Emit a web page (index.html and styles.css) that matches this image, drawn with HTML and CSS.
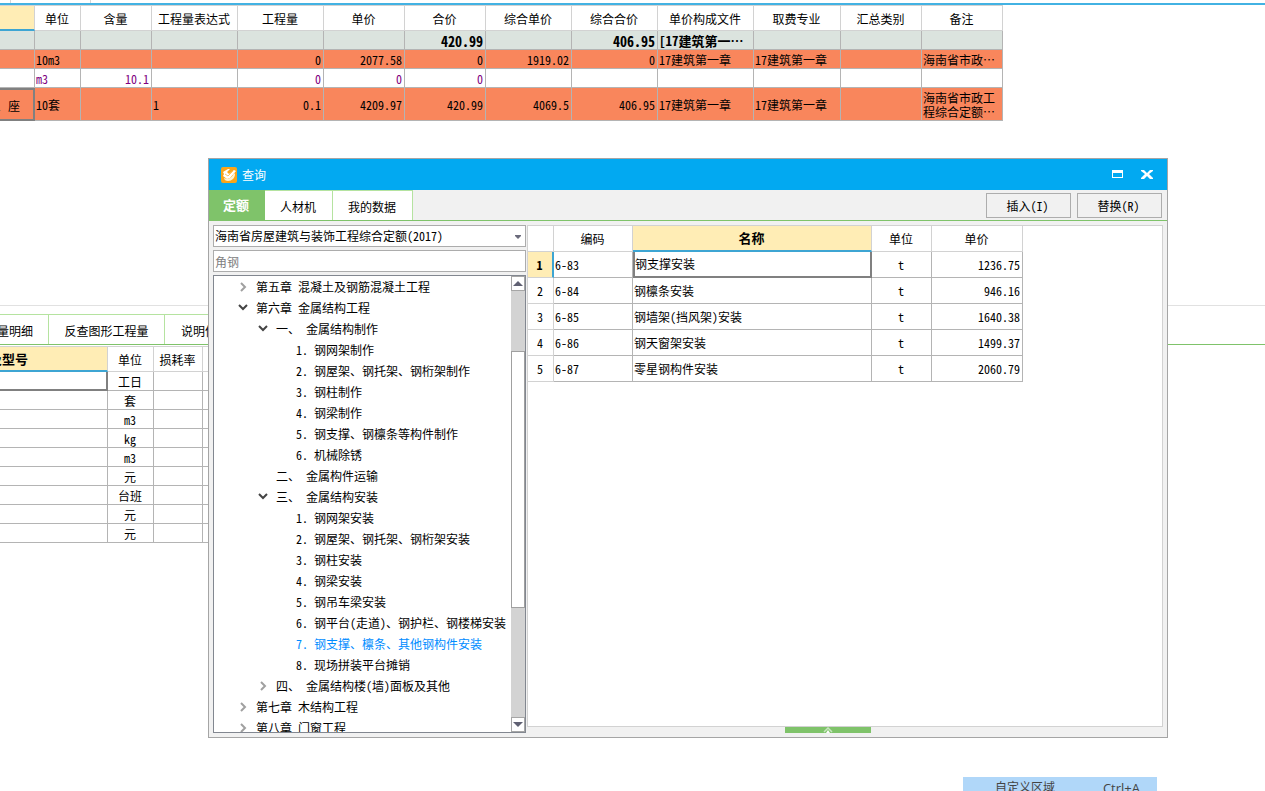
FILE: index.html
```html
<!DOCTYPE html>
<html lang="zh-CN">
<head>
<meta charset="utf-8">
<title>查询</title>
<link rel="stylesheet" href="styles.css">
</head>
<body>
<svg class="symbols" aria-hidden="true">
  <symbol id="closed" viewBox="0 0 10 10"><path d="M3 1l4 4-4 4" fill="none" stroke="#a0a0a0" stroke-width="2"/></symbol>
  <symbol id="open" viewBox="0 0 10 10"><path d="M1 2l4 4 4-4" fill="none" stroke="#444" stroke-width="2"/></symbol>
</svg>
<main class="workspace">
  <section class="upper">
    <div class="strip"><span class="tick-a"></span><span class="tick-b"></span></div>
    <table class="grid budget">
      <colgroup><col class="w35"><col class="w46"><col class="w71"><col class="w86"><col class="w86"><col class="w81"><col class="w81"><col class="w86"><col class="w86"><col class="w96"><col class="w87"><col class="w81"><col class="w81"></colgroup>
      <thead><tr><th class="picked"></th><th>单位</th><th>含量</th><th>工程量表达式</th><th>工程量</th><th>单价</th><th>合价</th><th>综合单价</th><th>综合合价</th><th>单价构成文件</th><th>取费专业</th><th>汇总类别</th><th>备注</th></tr></thead>
      <tbody>
        <tr class="total"><td></td><td></td><td></td><td></td><td></td><td></td><td class="num">420.99</td><td></td><td class="num">406.95</td><td>[17建筑第一…</td><td></td><td></td><td></td></tr>
        <tr class="orange"><td></td><td>10m3</td><td></td><td></td><td class="num">0</td><td class="num">2077.58</td><td class="num">0</td><td class="num">1919.02</td><td class="num">0</td><td>17建筑第一章</td><td>17建筑第一章</td><td></td><td>海南省市政…</td></tr>
        <tr class="material"><td></td><td>m3</td><td class="num">10.1</td><td></td><td class="num">0</td><td class="num">0</td><td class="num">0</td><td></td><td></td><td></td><td></td><td></td><td></td></tr>
        <tr class="orange tall"><td class="focus"><div class="cut">、座</div></td><td>10套</td><td></td><td>1</td><td class="num">0.1</td><td class="num">4209.97</td><td class="num">420.99</td><td class="num">4069.5</td><td class="num">406.95</td><td>17建筑第一章</td><td>17建筑第一章</td><td></td><td class="note">海南省市政工程综合定额…</td></tr>
      </tbody>
    </table>
  </section>
  <section class="lower">
    <nav class="detail-tabs"><button class="first">工程量明细</button><button class="second">反查图形工程量</button><button class="third">说明信息</button></nav>
    <table class="grid detail">
      <colgroup><col class="w108"><col class="w46"><col class="w49"><col class="w81"></colgroup>
      <thead><tr><th class="picked"><div class="cut">规格及型号</div></th><th>单位</th><th>损耗率</th><th></th></tr></thead>
      <tbody>
        <tr><td class="focus"></td><td>工日</td><td></td><td></td></tr>
        <tr><td></td><td>套</td><td></td><td></td></tr>
        <tr><td></td><td>m3</td><td></td><td></td></tr>
        <tr><td></td><td>kg</td><td></td><td></td></tr>
        <tr><td></td><td>m3</td><td></td><td></td></tr>
        <tr><td></td><td>元</td><td></td><td></td></tr>
        <tr><td></td><td>台班</td><td></td><td></td></tr>
        <tr><td></td><td>元</td><td></td><td></td></tr>
        <tr><td></td><td>元</td><td></td><td></td></tr>
      </tbody>
    </table>
  </section>
</main>

<section class="dialog" role="dialog" aria-labelledby="dialog-title">
  <header class="titlebar">
    <svg class="logo" viewBox="0 0 16 16" aria-hidden="true">
      <rect width="16" height="16" rx="2" fill="#f9a51a"/>
      <path d="M2 5l5-3h2L6 5l2 2 5-4 2 1-6 7-3 1-4-3 1-2z" fill="#fff"/>
      <path d="M13 6l1 1c0 4-3 7-7 7-2 0-4-1-4-3 4 2 8 0 10-5z" fill="#fff2cf"/>
      <path d="M7 9l5-5M4 7l3 2" stroke="#fbc566" fill="none"/>
    </svg>
    <h1 id="dialog-title">查询</h1>
    <button class="winbtn" aria-label="最大化"><svg viewBox="0 0 12 12"><path d="M0 1h11v8H0zM1 4v4h9V4z" fill="#fff" fill-rule="evenodd"/></svg></button>
    <button class="winbtn" aria-label="关闭"><svg viewBox="0 0 12 12"><path d="M0 1h3l3 3 3-3h3v1L8 5l4 4v1H9L6 7l-3 3H0V9l4-4-4-3z" fill="#fff"/></svg></button>
  </header>
  <div class="toolbar">
    <nav class="tabs"><button class="active">定额</button><button>人材机</button><button>我的数据</button></nav>
    <button class="action">插入(I)</button><button class="action">替换(R)</button>
  </div>
  <div class="body">
    <aside class="side">
      <div class="combo">
        <select aria-label="定额库"><option>海南省房屋建筑与装饰工程综合定额(2017)</option></select>
        <svg viewBox="0 0 6 4" aria-hidden="true"><path d="M0 0h6v1L3 4 0 1z" fill="#6b6b7b"/></svg>
      </div>
      <input class="search" type="text" placeholder="角钢" aria-label="查找">
      <div class="tree">
        <ul class="nodes">
          <li class="l0"><svg><use href="#closed"/></svg>第五章 混凝土及钢筋混凝土工程</li>
          <li class="l0"><svg><use href="#open"/></svg>第六章 金属结构工程</li>
          <li class="l1"><svg><use href="#open"/></svg>一、 金属结构制作</li>
          <li class="l2">1. 钢网架制作</li>
          <li class="l2">2. 钢屋架、钢托架、钢桁架制作</li>
          <li class="l2">3. 钢柱制作</li>
          <li class="l2">4. 钢梁制作</li>
          <li class="l2">5. 钢支撑、钢檩条等构件制作</li>
          <li class="l2">6. 机械除锈</li>
          <li class="l1"><svg></svg>二、 金属构件运输</li>
          <li class="l1"><svg><use href="#open"/></svg>三、 金属结构安装</li>
          <li class="l2">1. 钢网架安装</li>
          <li class="l2">2. 钢屋架、钢托架、钢桁架安装</li>
          <li class="l2">3. 钢柱安装</li>
          <li class="l2">4. 钢梁安装</li>
          <li class="l2">5. 钢吊车梁安装</li>
          <li class="l2">6. 钢平台(走道)、钢护栏、钢楼梯安装</li>
          <li class="l2 current">7. 钢支撑、檩条、其他钢构件安装</li>
          <li class="l2">8. 现场拼装平台摊销</li>
          <li class="l1"><svg><use href="#closed"/></svg>四、 金属结构楼(墙)面板及其他</li>
          <li class="l0"><svg><use href="#closed"/></svg>第七章 木结构工程</li>
          <li class="l0"><svg><use href="#closed"/></svg>第八章 门窗工程</li>
        </ul>
        <div class="scroll">
          <button aria-label="向上"><svg viewBox="0 0 10 5"><path d="M5 0l5 5H0z" fill="#5f6072"/></svg></button>
          <div class="track"><div class="thumb"></div></div>
          <button aria-label="向下"><svg viewBox="0 0 10 5"><path d="M0 0h10L5 5z" fill="#5f6072"/></svg></button>
        </div>
      </div>
    </aside>
    <div class="results">
      <div class="sheet">
        <table class="grid quota">
          <colgroup><col class="w26"><col class="w79"><col class="w239"><col class="w60"><col class="w91"></colgroup>
          <thead><tr><th></th><th>编码</th><th class="picked">名称</th><th>单位</th><th>单价</th></tr></thead>
          <tbody>
            <tr><th class="rowpick">1</th><td>6-83</td><td class="focus">钢支撑安装</td><td class="mid">t</td><td class="num">1236.75</td></tr>
            <tr><th>2</th><td>6-84</td><td>钢檩条安装</td><td class="mid">t</td><td class="num">946.16</td></tr>
            <tr><th>3</th><td>6-85</td><td>钢墙架(挡风架)安装</td><td class="mid">t</td><td class="num">1640.38</td></tr>
            <tr><th>4</th><td>6-86</td><td>钢天窗架安装</td><td class="mid">t</td><td class="num">1499.37</td></tr>
            <tr><th>5</th><td>6-87</td><td>零星钢构件安装</td><td class="mid">t</td><td class="num">2060.79</td></tr>
          </tbody>
        </table>
      </div>
      <button class="handle" aria-label="展开"><svg viewBox="0 0 10 6"><path d="M1 5l4-4 4 4" fill="none" stroke="#c9e6c0" stroke-width="1.500"/><path d="M3 6l2-3 2 3z" fill="#fff"/></svg></button>
    </div>
  </div>
</section>

<div class="menu" role="menu"><button role="menuitem"><span>自定义区域</span><span class="key">Ctrl+A</span></button></div>
</body>
</html>
```
FILE: styles.css
```css
* { box-sizing: border-box; }
html, body { height: 100%; }
body {
  margin: 0;
  background: #fff;
  color: #000;
  font: 12px/14px "Noto Sans Mono CJK SC", "Noto Sans CJK SC", sans-serif;
  position: relative;
  overflow: hidden;
}
button, input, select { font: inherit; color: inherit; margin: 0; padding: 0; border: 0; border-radius: 0; background: none; }
.symbols { display: none; }
svg { display: block; }

.workspace { display: flex; flex-direction: column; min-height: 100%; }
.upper { height: 305px; flex: none; }
.strip { height: 5px; display: flex; border-bottom: 2px solid #42b2e3; }
.strip span { border-right: 1px solid #d6d6d6; }
.tick-a { width: 11px; }
.tick-b { width: 80px; }

.grid { table-layout: fixed; border-collapse: separate; border-spacing: 0; }
.grid th, .grid td {
  padding: 0 2px 0 1px;
  border-right: 1px solid #b4b4b4;
  border-bottom: 1px solid #b4b4b4;
  overflow: hidden;
  white-space: nowrap;
  text-align: left;
}
.grid th { font-weight: normal; text-align: center; border-color: #d2d2d2; }
.grid thead th { height: 26px; border-top: 1px solid #d2d2d2; }
.grid .num { text-align: right; }
.grid .mid { text-align: center; }
.grid .picked { background: #ffedb5; border-bottom: 2px solid #3da5d3; font-size: 13px; font-weight: bold; }
.grid .focus { border: 2px solid #808080; border-left-width: 0; }
.cut { display: flex; justify-content: flex-end; }

.w26 { width: 26px; } .w35 { width: 35px; } .w46 { width: 46px; } .w49 { width: 49px; }
.w60 { width: 60px; } .w71 { width: 71px; } .w79 { width: 79px; } .w81 { width: 81px; }
.w86 { width: 86px; } .w87 { width: 87px; } .w91 { width: 91px; } .w96 { width: 96px; }
.w108 { width: 108px; } .w239 { width: 239px; }

.budget { width: 1003px; }
.budget thead th { padding-top: 2px; }
.budget td { height: 19px; padding-top: 2px; }
.total td { background: #dbe3de; font-size: 13px; font-weight: bold; }
.total .num { font-size: 14px; }
.orange td { background: #f9865c; }
.material td { color: #800080; }
.budget .tall td { height: 33px; }
.budget .focus { padding-right: 13px; }
.grid .note { white-space: normal; }

.lower { border-top: 1px solid #e1e1e1; padding-top: 8px; }
.detail-tabs { display: flex; height: 31px; border-bottom: 1px solid #7fc36a; }
.detail-tabs button { border-top: 1px solid #b5e3a0; border-right: 1px solid #b5e3a0; white-space: nowrap; overflow: hidden; padding-top: 2px; }
.detail-tabs .first { width: 49px; display: flex; justify-content: flex-end; align-items: center; padding-right: 15px; }
.detail-tabs .second { width: 116px; }
.detail-tabs .third { width: 81px; }
.detail { width: 284px; margin-top: 1px; }
.detail td { height: 19px; text-align: center; padding-top: 2px; }
.detail thead th { padding-top: 2px; }
.detail .picked { padding-right: 79px; padding-top: 0; }
.detail .focus { border-top: 0; }

.dialog {
  position: absolute;
  left: 208px;
  top: 158px;
  width: 960px;
  height: 580px;
  display: flex;
  flex-direction: column;
  background: #f1f1f1;
  border: 1px solid #a5a5a5;
}
.titlebar { display: flex; align-items: center; height: 31px; flex: none; padding: 0 14px 0 12px; background: #02a9f1; color: #fff; }
.logo { width: 16px; height: 16px; margin-right: 5px; }
.titlebar h1 { margin: 0; font-size: 12px; font-weight: normal; flex: 1; }
.winbtn { margin-left: 17px; }
.winbtn svg { width: 12px; height: 12px; }
.toolbar { display: flex; align-items: flex-start; height: 31px; flex: none; gap: 6px; padding-right: 5px; border-bottom: 1px solid #7fc36a; }
.tabs { display: flex; align-self: stretch; flex: 1; }
.tabs button { padding: 3px 16px 0 15px; background: #fff; border-top: 1px solid #b5e3a0; border-right: 1px solid #b5e3a0; }
.tabs .active { width: 56px; padding: 0 2px 0 0; background: #7fc36a; border: 0; color: #fff; font-size: 13px; font-weight: bold; }
.action { width: 85px; height: 25px; margin-top: 3px; padding-right: 2px; border: 1px solid #adadad; }

.body { flex: 1; min-height: 0; display: flex; gap: 1px; padding: 4px; }
.side { width: 313px; flex: none; display: flex; flex-direction: column; gap: 3px; }
.combo { position: relative; height: 22px; }
.combo select { appearance: none; width: 100%; height: 22px; padding: 0 18px 0 1px; background: #fff; border: 1px solid #acacac; }
.combo svg { position: absolute; right: 5px; top: 10px; width: 6px; height: 4px; pointer-events: none; }
.search { height: 22px; padding: 0 1px; background: #fff; border: 1px solid #acacac; }
.search::placeholder { color: #808080; opacity: 1; }
.tree { flex: 1; min-height: 0; display: flex; border: 1px solid #828790; background: #fff; }
.nodes { flex: 1; min-width: 0; margin: 0; padding: 0; list-style: none; overflow: hidden; }
.nodes li { display: flex; align-items: center; height: 21px; white-space: pre; }
.nodes svg { width: 10px; height: 10px; margin-right: 8px; }
.l0 { padding-left: 24px; }
.l1 { padding-left: 44px; }
.l2 { padding-left: 82px; }
.current { color: #008cff; }
.scroll { width: 14px; display: flex; flex-direction: column; }
.scroll button { height: 15px; background: #fff; border: 1px solid #a6a6a6; display: flex; align-items: center; justify-content: center; }
.scroll svg { width: 10px; height: 5px; flex: none; }
.track { flex: 1; background: #d3d3d3; padding-top: 60px; }
.thumb { height: 257px; background: #fff; border: 1px solid #a0a0a0; }

.results { flex: 1; min-width: 0; display: flex; flex-direction: column; align-items: center; }
.sheet { width: 100%; flex: 1; border: 1px solid #d2d2d2; background: #fff; }
.quota { width: 495px; }
.quota thead th { border-top: 0; }
.quota td, .quota tbody th { height: 26px; }
.quota .rowpick { background: #ffedb5; border-right: 2px solid #3da5d3; font-weight: bold; }
.quota .focus { border-top: 0; border-left-width: 2px; padding-left: 0; }
.handle { width: 86px; height: 6px; margin-right: 34px; background: #7fc36a; display: flex; justify-content: center; }
.handle svg { width: 10px; height: 6px; }

.menu { position: absolute; left: 963px; top: 777px; width: 194px; background: #b0d7f9; color: #444; font-family: "Open Sans", "Noto Sans CJK SC", sans-serif; }
.menu button { display: flex; justify-content: space-between; width: 100%; height: 22px; padding: 0 17px 0 32px; align-items: center; }
.menu .key { font-size: 13px; }
```
